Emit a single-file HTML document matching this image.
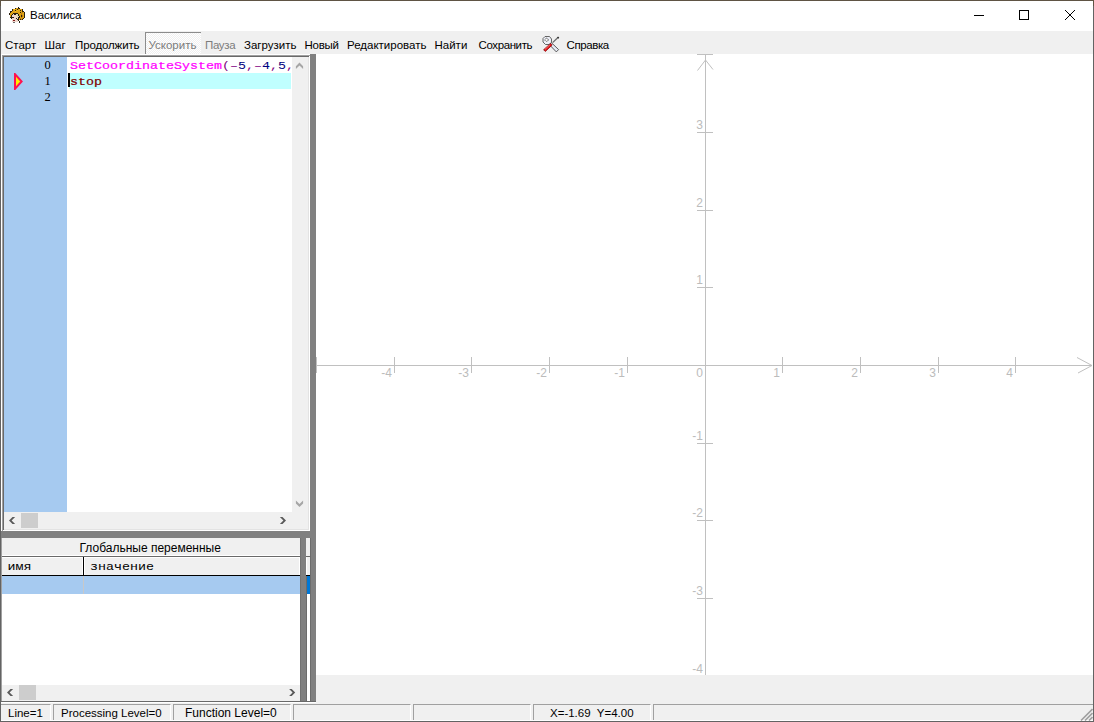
<!DOCTYPE html>
<html><head><meta charset="utf-8">
<style>
html,body{margin:0;padding:0;width:1094px;height:722px;overflow:hidden;background:#f0f0f0;position:relative;font-family:"Liberation Sans",sans-serif;}
.a{position:absolute;}
.t{position:absolute;white-space:pre;font-family:"Liberation Sans",sans-serif;font-size:11.5px;color:#000;line-height:14px;}
.m{position:absolute;white-space:pre;font-family:"Liberation Mono",monospace;font-size:13.33px;line-height:16px;}
</style></head><body>
<!-- title bar -->
<div class="a" style="left:0;top:0;width:1094px;height:31px;background:#fff"></div>
<!-- window border -->
<div class="a" style="left:0;top:0;width:1094px;height:1px;background:#5f5444"></div>
<div class="a" style="left:0;top:0;width:1px;height:722px;background:#636363"></div>
<div class="a" style="left:0;top:0;width:1px;height:6px;background:#5f5444"></div>
<div class="a" style="left:1093px;top:0;width:1px;height:722px;background:#636363"></div>
<div class="a" style="left:1093px;top:0;width:1px;height:6px;background:#5f5444"></div>
<div class="a" style="left:0;top:721px;width:1094px;height:1px;background:#636363"></div>

<!-- title icon -->
<svg class="a" style="left:9px;top:7px" width="16" height="16" viewBox="0 0 16 16" shape-rendering="crispEdges"><rect x="9" y="0" width="1" height="1" fill="#2a2010"/><rect x="6" y="1" width="1" height="1" fill="#2a2010"/><rect x="7" y="1" width="2" height="1" fill="#e0a416"/><rect x="9" y="1" width="2" height="1" fill="#2a2010"/><rect x="3" y="2" width="1" height="1" fill="#2a2010"/><rect x="4" y="2" width="1" height="1" fill="#e0a416"/><rect x="5" y="2" width="1" height="1" fill="#f4c020"/><rect x="6" y="2" width="2" height="1" fill="#e0a416"/><rect x="8" y="2" width="1" height="1" fill="#2a2010"/><rect x="9" y="2" width="4" height="1" fill="#e0a416"/><rect x="13" y="2" width="1" height="1" fill="#2a2010"/><rect x="3" y="3" width="1" height="1" fill="#2a2010"/><rect x="4" y="3" width="2" height="1" fill="#e0a416"/><rect x="6" y="3" width="1" height="1" fill="#2a2010"/><rect x="7" y="3" width="1" height="1" fill="#e0a416"/><rect x="8" y="3" width="1" height="1" fill="#f4c020"/><rect x="9" y="3" width="2" height="1" fill="#e0a416"/><rect x="11" y="3" width="1" height="1" fill="#2a2010"/><rect x="12" y="3" width="1" height="1" fill="#e0a416"/><rect x="13" y="3" width="1" height="1" fill="#2a2010"/><rect x="1" y="4" width="2" height="1" fill="#2a2010"/><rect x="3" y="4" width="3" height="1" fill="#e0a416"/><rect x="6" y="4" width="1" height="1" fill="#f4c020"/><rect x="7" y="4" width="6" height="1" fill="#e0a416"/><rect x="13" y="4" width="2" height="1" fill="#2a2010"/><rect x="1" y="5" width="1" height="1" fill="#2a2010"/><rect x="2" y="5" width="9" height="1" fill="#e0a416"/><rect x="11" y="5" width="1" height="1" fill="#2a2010"/><rect x="12" y="5" width="1" height="1" fill="#e0a416"/><rect x="13" y="5" width="1" height="1" fill="#b87c10"/><rect x="14" y="5" width="1" height="1" fill="#e0a416"/><rect x="15" y="5" width="1" height="1" fill="#2a2010"/><rect x="0" y="6" width="1" height="1" fill="#2a2010"/><rect x="1" y="6" width="3" height="1" fill="#e0a416"/><rect x="4" y="6" width="5" height="1" fill="#2a2010"/><rect x="9" y="6" width="3" height="1" fill="#e0a416"/><rect x="12" y="6" width="1" height="1" fill="#b87c10"/><rect x="13" y="6" width="2" height="1" fill="#e0a416"/><rect x="15" y="6" width="1" height="1" fill="#2a2010"/><rect x="0" y="7" width="1" height="1" fill="#2a2010"/><rect x="1" y="7" width="2" height="1" fill="#e0a416"/><rect x="3" y="7" width="1" height="1" fill="#2a2010"/><rect x="4" y="7" width="1" height="1" fill="#f0d8cc"/><rect x="5" y="7" width="2" height="1" fill="#2a2010"/><rect x="7" y="7" width="2" height="1" fill="#e4dcb0"/><rect x="9" y="7" width="1" height="1" fill="#2a2010"/><rect x="10" y="7" width="2" height="1" fill="#e0a416"/><rect x="12" y="7" width="1" height="1" fill="#b87c10"/><rect x="13" y="7" width="2" height="1" fill="#e0a416"/><rect x="15" y="7" width="1" height="1" fill="#2a2010"/><rect x="1" y="8" width="1" height="1" fill="#e0a416"/><rect x="2" y="8" width="1" height="1" fill="#2a2010"/><rect x="3" y="8" width="4" height="1" fill="#f0d8cc"/><rect x="7" y="8" width="2" height="1" fill="#e4dcb0"/><rect x="9" y="8" width="1" height="1" fill="#2a2010"/><rect x="10" y="8" width="2" height="1" fill="#e0a416"/><rect x="12" y="8" width="1" height="1" fill="#2a2010"/><rect x="13" y="8" width="1" height="1" fill="#b87c10"/><rect x="14" y="8" width="1" height="1" fill="#e0a416"/><rect x="15" y="8" width="1" height="1" fill="#2a2010"/><rect x="1" y="9" width="1" height="1" fill="#e0a416"/><rect x="2" y="9" width="1" height="1" fill="#2a2010"/><rect x="3" y="9" width="5" height="1" fill="#f0d8cc"/><rect x="8" y="9" width="2" height="1" fill="#e4dcb0"/><rect x="10" y="9" width="1" height="1" fill="#2a2010"/><rect x="11" y="9" width="1" height="1" fill="#e0a416"/><rect x="12" y="9" width="1" height="1" fill="#2a2010"/><rect x="13" y="9" width="1" height="1" fill="#b87c10"/><rect x="14" y="9" width="1" height="1" fill="#e0a416"/><rect x="15" y="9" width="1" height="1" fill="#2a2010"/><rect x="1" y="10" width="4" height="1" fill="#2a2010"/><rect x="5" y="10" width="3" height="1" fill="#f0d8cc"/><rect x="8" y="10" width="1" height="1" fill="#e4dcb0"/><rect x="9" y="10" width="2" height="1" fill="#2a2010"/><rect x="11" y="10" width="1" height="1" fill="#e0a416"/><rect x="12" y="10" width="1" height="1" fill="#b87c10"/><rect x="13" y="10" width="2" height="1" fill="#e0a416"/><rect x="15" y="10" width="1" height="1" fill="#2a2010"/><rect x="2" y="11" width="1" height="1" fill="#2a2010"/><rect x="3" y="11" width="4" height="1" fill="#f0d8cc"/><rect x="7" y="11" width="1" height="1" fill="#2a2010"/><rect x="8" y="11" width="1" height="1" fill="#f0d8cc"/><rect x="9" y="11" width="1" height="1" fill="#2a2010"/><rect x="10" y="11" width="1" height="1" fill="#e0a416"/><rect x="11" y="11" width="1" height="1" fill="#b87c10"/><rect x="12" y="11" width="1" height="1" fill="#e0a416"/><rect x="13" y="11" width="1" height="1" fill="#b87c10"/><rect x="14" y="11" width="1" height="1" fill="#2a2010"/><rect x="3" y="12" width="5" height="1" fill="#f0d8cc"/><rect x="8" y="12" width="2" height="1" fill="#2a2010"/><rect x="10" y="12" width="1" height="1" fill="#e0a416"/><rect x="11" y="12" width="1" height="1" fill="#2a2010"/><rect x="12" y="12" width="1" height="1" fill="#b87c10"/><rect x="13" y="12" width="1" height="1" fill="#2a2010"/><rect x="3" y="13" width="1" height="1" fill="#f0d8cc"/><rect x="4" y="13" width="2" height="1" fill="#801818"/><rect x="6" y="13" width="3" height="1" fill="#f0d8cc"/><rect x="9" y="13" width="1" height="1" fill="#2a2010"/><rect x="3" y="14" width="6" height="1" fill="#f0d8cc"/><rect x="10" y="14" width="1" height="1" fill="#2a2010"/><rect x="4" y="15" width="2" height="1" fill="#707070"/><rect x="10" y="15" width="1" height="1" fill="#2a2010"/></svg>
<div class="t" style="left:30px;top:8px">Василиса</div>

<!-- caption buttons -->
<div class="a" style="left:974px;top:15px;width:10px;height:1px;background:#000"></div>
<div class="a" style="left:1019px;top:10px;width:8px;height:8px;border:1px solid #000"></div>
<svg class="a" style="left:1064px;top:9px" width="12" height="12" viewBox="0 0 12 12"><path d="M1 1 L11 11 M11 1 L1 11" stroke="#000" stroke-width="1"/></svg>

<!-- menu/toolbar -->
<div class="a" style="left:1px;top:54px;width:1092px;height:1px;background:#fff"></div>
<div class="t" style="left:5px;top:38px">Старт</div>
<div class="t" style="left:44.5px;top:38px">Шаг</div>
<div class="t" style="left:75px;top:38px;letter-spacing:-0.13px">Продолжить</div>
<div class="a" style="left:145px;top:32px;width:55px;height:21px;border-left:1px solid #8c8c8c;border-top:1px solid #8c8c8c;background:repeating-conic-gradient(#fff 0 25%, #f0f0f0 0 50%) 0 0/2px 2px"></div>
<div class="t" style="left:148.5px;top:38px;color:#7c7c7c">Ускорить</div>
<div class="t" style="left:205px;top:38px;color:#7c7c7c;letter-spacing:-0.35px">Пауза</div>
<div class="t" style="left:244px;top:38px">Загрузить</div>
<div class="t" style="left:304.5px;top:38px;letter-spacing:-0.27px">Новый</div>
<div class="t" style="left:347px;top:38px">Редактировать</div>
<div class="t" style="left:434.5px;top:38px">Найти</div>
<div class="t" style="left:478.5px;top:38px;letter-spacing:-0.39px">Сохранить</div>
<svg class="a" style="left:542px;top:35px" width="18" height="18" viewBox="0 0 18 18">
<path d="M9.3 7.6 L16.6 14.6 L14.3 16.9 L7.3 9.6Z" fill="#e6eaf4" stroke="#4a4a4a" stroke-width="0.9"/>
<path d="M3 1.5 L7.5 1.5 L9.5 4 L9.5 7.5 L7 9.5 L3.5 9.5 L1 7 L1 3.5Z" fill="#eef0f8" stroke="#555" stroke-width="0.9" stroke-linejoin="round"/>
<circle cx="4.6" cy="4.8" r="1.6" fill="#fafafa" stroke="#3a3a3a" stroke-width="0.9" stroke-dasharray="1 0.6"/>
<path d="M16.2 2.3 L10.6 7.6" stroke="#6a6a6a" stroke-width="1.3"/>
<path d="M15.6 2 L16.8 3.2" stroke="#2a2a2a" stroke-width="1.3"/>
<path d="M8.6 8.4 L10.2 10 L3.4 16.4 L1.6 14.8Z" fill="#e4141a" stroke="#8a1010" stroke-width="0.8" stroke-linejoin="round"/>
<path d="M3 14.4 L8 9.7" stroke="#ff9a9a" stroke-width="0.7"/>
</svg><div class="t" style="left:566.5px;top:38px;letter-spacing:-0.4px">Справка</div>

<!-- editor box -->
<div class="a" style="left:1px;top:54px;width:1px;height:477px;background:#fff"></div>
<div class="a" style="left:2px;top:55px;width:307px;height:476px;background:#fff;border-top:1px solid #a0a0a0;border-left:1px solid #a0a0a0;"></div>
<div class="a" style="left:3px;top:56px;width:305px;height:473px;background:#e3e3e3;border-top:1px solid #696969;border-left:1px solid #696969;"></div>
<div class="a" style="left:4px;top:57px;width:304px;height:472px;background:#fff"></div>
<div class="a" style="left:4px;top:57px;width:63px;height:455px;background:#a6caf0"></div>
<div class="a" style="left:69px;top:73px;width:222px;height:16px;background:#c0ffff"></div>
<div class="a" style="left:68px;top:73px;width:2px;height:14px;background:#000"></div>
<!-- gutter numbers -->
<div class="m" style="left:44.5px;top:57px;color:#000;font-family:'Liberation Serif',serif;font-size:12.5px;transform:scaleY(0.95);transform-origin:0 11px">0</div>
<div class="m" style="left:44.5px;top:73px;color:#000;font-family:'Liberation Serif',serif;font-size:12.5px;transform:scaleY(0.95);transform-origin:0 11px">1</div>
<div class="m" style="left:44.5px;top:89px;color:#000;font-family:'Liberation Serif',serif;font-size:12.5px;transform:scaleY(0.95);transform-origin:0 11px">2</div>
<svg class="a" style="left:14px;top:73px" width="9" height="17" viewBox="0 0 9 17"><path d="M1 1.2 L7.6 8.5 L1 15.8Z" fill="#ffee00" stroke="#ff1050" stroke-width="2" stroke-linejoin="miter"/></svg>
<!-- code -->
<div class="m" style="left:70px;top:58px;color:#800080;transform:scaleY(0.86);transform-origin:0 11px"><span style="color:#ff00ff;-webkit-text-stroke:0.25px #ff00ff">SetCoordinateSystem</span>(–<span style="color:#000080">5</span>,–<span style="color:#000080">4</span>,<span style="color:#000080">5</span>,</div>
<div class="m" style="left:70px;top:74px;-webkit-text-stroke:0.25px #800000;color:#800000;transform:scaleY(0.88);transform-origin:0 11px">stop</div>
<!-- vscroll -->
<div class="a" style="left:292px;top:57px;width:16px;height:455px;background:#f0f0f0"></div>
<!-- hscroll -->
<div class="a" style="left:4px;top:512px;width:288px;height:17px;background:#f0f0f0"></div>
<div class="a" style="left:292px;top:512px;width:16px;height:17px;background:#f0f0f0"></div>
<div class="a" style="left:21px;top:513px;width:17px;height:15px;background:#cdcdcd"></div>

<!-- splitters -->
<div class="a" style="left:310px;top:54px;width:6px;height:647px;background:#808080"></div>
<div class="a" style="left:1px;top:531px;width:315px;height:7px;background:#808080"></div>

<!-- graph -->
<div class="a" style="left:316px;top:54px;width:777px;height:621px;background:#fff"></div>
<svg class="a" style="left:0;top:0" width="1094" height="722">
<g stroke="#c0c0c0" stroke-width="1" shape-rendering="crispEdges" fill="none">
<path d="M316 365.5 H1092"/>
<path d="M705.5 54 V675"/>
<path d="M316.5 357 V373"/>
<path d="M394.5 357 V373"/>
<path d="M471.5 357 V373"/>
<path d="M549.5 357 V373"/>
<path d="M627.5 357 V373"/>
<path d="M782.5 357 V373"/>
<path d="M860.5 357 V373"/>
<path d="M938.5 357 V373"/>
<path d="M1015.5 357 V373"/>
<path d="M697 54.5 H713"/>
<path d="M697 132.5 H713"/>
<path d="M697 210.5 H713"/>
<path d="M697 287.5 H713"/>
<path d="M697 443.5 H713"/>
<path d="M697 520.5 H713"/>
<path d="M697 598.5 H713"/>
</g>
<g stroke="#c0c0c0" stroke-width="1" fill="none">
<path d="M1077 357.5 L1092 365.5 M1078 373 L1092 365.5"/>
<path d="M697.5 70.5 L705.5 60 L713 69.5"/>
</g>
<g font-family="Liberation Sans" font-size="12" fill="#bcbcbc">
<text x="392" y="377" text-anchor="end">-4</text>
<text x="469" y="377" text-anchor="end">-3</text>
<text x="547" y="377" text-anchor="end">-2</text>
<text x="625" y="377" text-anchor="end">-1</text>
<text x="780" y="377" text-anchor="end">1</text>
<text x="858" y="377" text-anchor="end">2</text>
<text x="936" y="377" text-anchor="end">3</text>
<text x="1013" y="377" text-anchor="end">4</text>
<text x="703" y="377" text-anchor="end">0</text>
<text x="703" y="129" text-anchor="end">3</text>
<text x="703" y="207" text-anchor="end">2</text>
<text x="703" y="284" text-anchor="end">1</text>
<text x="703" y="440" text-anchor="end">-1</text>
<text x="703" y="517" text-anchor="end">-2</text>
<text x="703" y="595" text-anchor="end">-3</text>
<text x="703" y="673" text-anchor="end">-4</text>
</g>
</svg>

<!-- global vars panel -->
<div class="a" style="left:1px;top:538px;width:309px;height:163px;background:#fff"></div>
<div class="a" style="left:1px;top:538px;width:1px;height:163px;background:#a0a0a0"></div>
<div class="a" style="left:2px;top:538px;width:299px;height:17px;background:#f0f0f0"></div>
<div class="a" style="left:2px;top:555px;width:299px;height:1px;background:#fff"></div>
<div class="a" style="left:2px;top:556px;width:299px;height:1px;background:#696969"></div>
<div class="t" style="left:79.5px;top:540.5px;font-size:12px">Глобальные переменные</div>
<!-- column headers -->
<div class="a" style="left:2px;top:557px;width:298px;height:18px;background:#f0f0f0;border-top:0"></div>
<div class="a" style="left:2px;top:557px;width:81px;height:1px;background:#fff"></div>
<div class="a" style="left:84px;top:557px;width:216px;height:1px;background:#fff"></div>
<div class="a" style="left:82px;top:557px;width:1px;height:18px;background:#fff"></div>
<div class="a" style="left:83px;top:557px;width:1px;height:19px;background:#000"></div>
<div class="a" style="left:84px;top:557px;width:1px;height:18px;background:#fff"></div>
<div class="a" style="left:299px;top:557px;width:1px;height:18px;background:#fff"></div>
<div class="a" style="left:2px;top:575px;width:298px;height:1px;background:#000"></div>
<div class="m" style="left:7.5px;top:559px;color:#000;transform:scaleY(0.86);transform-origin:0 11px">имя</div>
<div class="m" style="left:90px;top:559px;color:#000;transform:scaleY(0.86);transform-origin:0 11px">значение</div>
<!-- selected row -->
<div class="a" style="left:2px;top:576px;width:298px;height:18px;background:#a6caf0"></div>
<div class="a" style="left:83px;top:576px;width:1px;height:18px;background:#c8c8c8"></div>
<!-- dark bar + narrow column -->
<div class="a" style="left:300px;top:538px;width:7px;height:163px;background:#808080"></div>
<div class="a" style="left:300px;top:538px;width:1px;height:163px;background:#727272"></div>
<div class="a" style="left:306px;top:538px;width:1px;height:163px;background:#6c6c6c"></div>
<div class="a" style="left:306px;top:538px;width:4px;height:18px;background:#f0f0f0"></div>
<div class="a" style="left:306px;top:556px;width:4px;height:1px;background:#696969"></div>
<div class="a" style="left:306px;top:557px;width:4px;height:18px;background:#f0f0f0"></div>
<div class="a" style="left:306px;top:557px;width:1px;height:18px;background:#fff"></div>
<div class="a" style="left:306px;top:575px;width:4px;height:1px;background:#000"></div>
<div class="a" style="left:307px;top:576px;width:3px;height:18px;background:#0078d7"></div>
<!-- hscroll vars -->
<div class="a" style="left:2px;top:685px;width:298px;height:16px;background:#f0f0f0"></div>
<div class="a" style="left:19px;top:685px;width:17px;height:15px;background:#cdcdcd"></div>

<!-- main splitter lower -->
<div class="a" style="left:310px;top:538px;width:6px;height:163px;background:#808080;border-left:1px solid #6c6c6c;box-sizing:border-box"></div>
<div class="a" style="left:1px;top:701px;width:315px;height:1px;background:#696969"></div>

<!-- bottom gray under graph -->
<div class="a" style="left:316px;top:675px;width:777px;height:29px;background:#f0f0f0"></div>

<!-- status bar -->
<div class="a" style="left:1px;top:702px;width:1092px;height:19px;background:#f0f0f0"></div>
<div class="a" style="left:1px;top:702px;width:315px;height:1px;background:#fff"></div>
<div class="a" style="left:1px;top:720px;width:1092px;height:1px;background:#fff"></div>
<div class="a" style="left:1px;top:704px;width:50px;height:16px;border-top:1px solid #a0a0a0;border-right:1px solid #fff;box-sizing:border-box"></div>
<div class="a" style="left:53px;top:704px;width:118px;height:16px;border-top:1px solid #a0a0a0;border-left:1px solid #a0a0a0;border-right:1px solid #fff;box-sizing:border-box"></div>
<div class="a" style="left:173px;top:704px;width:118px;height:16px;border-top:1px solid #a0a0a0;border-left:1px solid #a0a0a0;border-right:1px solid #fff;box-sizing:border-box"></div>
<div class="a" style="left:293px;top:704px;width:118px;height:16px;border-top:1px solid #a0a0a0;border-left:1px solid #a0a0a0;border-right:1px solid #fff;box-sizing:border-box"></div>
<div class="a" style="left:413px;top:704px;width:118px;height:16px;border-top:1px solid #a0a0a0;border-left:1px solid #a0a0a0;border-right:1px solid #fff;box-sizing:border-box"></div>
<div class="a" style="left:533px;top:704px;width:118px;height:16px;border-top:1px solid #a0a0a0;border-left:1px solid #a0a0a0;border-right:1px solid #fff;box-sizing:border-box"></div>
<div class="a" style="left:653px;top:704px;width:440px;height:16px;border-top:1px solid #a0a0a0;border-left:1px solid #a0a0a0;box-sizing:border-box"></div>
<div class="t" style="left:8px;top:706px">Line=1</div>
<div class="t" style="left:61px;top:706px">Processing Level=0</div>
<div class="t" style="left:185px;top:705.5px;font-size:12px">Function Level=0</div>
<div class="t" style="left:550px;top:706px">X=-1.69  Y=4.00</div>
<svg class="a" style="left:1078px;top:706px" width="15" height="15" viewBox="1078 706 15 15"><g stroke="#a0a0a0" stroke-width="1.6"><path d="M1081 720.5 L1092.5 709 M1085 720.5 L1092.5 713 M1089 720.5 L1092.5 717"/></g></svg>
<svg class="a" style="left:0;top:0;z-index:5" width="1094" height="722">
<path d="M299.50 62.60 L303.10 66.20 L303.10 69.10 L299.50 65.50 L295.90 69.10 L295.90 66.20Z" fill="#a6a6a6"/>
<path d="M299.50 507.00 L303.10 503.40 L303.10 500.50 L299.50 504.10 L295.90 500.50 L295.90 503.40Z" fill="#a6a6a6"/>
<path d="M9.00 520.50 L12.50 517.00 L15.10 517.00 L11.60 520.50 L15.10 524.00 L12.50 524.00Z M286.00 520.50 L282.50 517.00 L279.90 517.00 L283.40 520.50 L279.90 524.00 L282.50 524.00Z M7.00 692.50 L10.50 689.00 L13.10 689.00 L9.60 692.50 L13.10 696.00 L10.50 696.00Z M295.20 692.50 L291.70 689.00 L289.10 689.00 L292.60 692.50 L289.10 696.00 L291.70 696.00Z" fill="#5a5a5a"/>
</svg>
</body></html>
